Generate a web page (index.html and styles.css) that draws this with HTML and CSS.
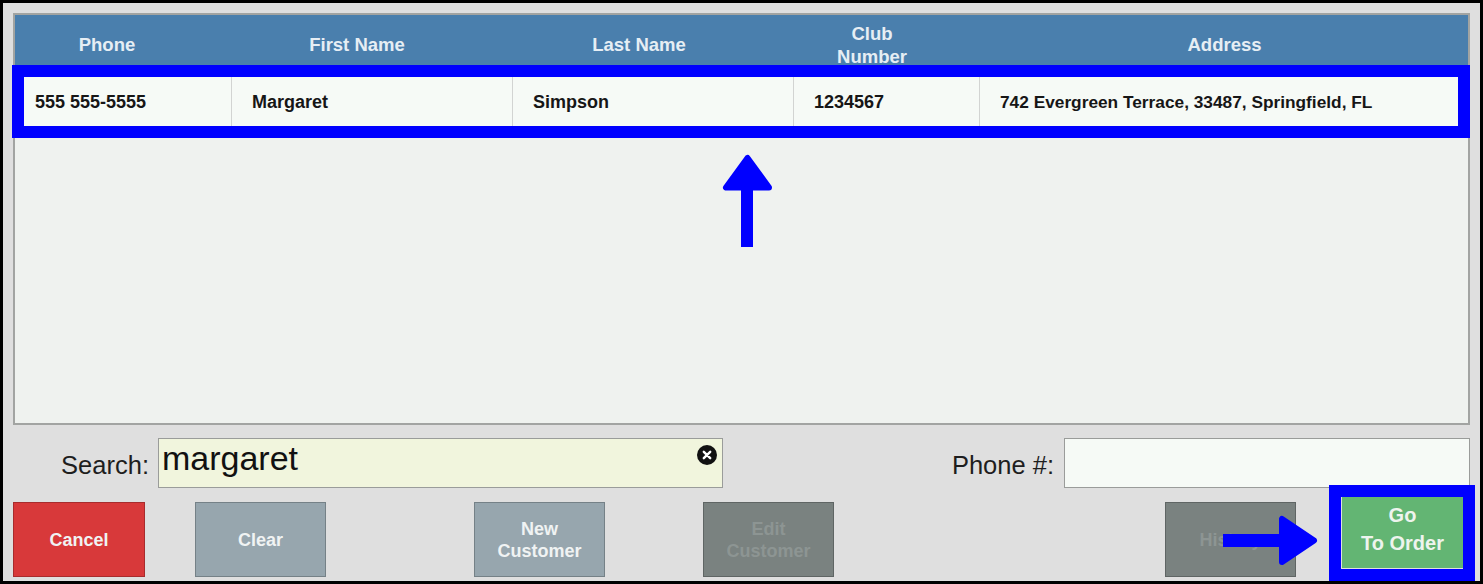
FILE: index.html
```html
<!DOCTYPE html>
<html>
<head>
<meta charset="utf-8">
<link rel="stylesheet" href="styles.css">
</head>
<body>
<div class="frame">
  <div class="panel">
    <div class="grid-head">
      <div class="hcell">Phone</div>
      <div class="hcell">First Name</div>
      <div class="hcell">Last Name</div>
      <div class="hcell hcell-two">Club<br>Number</div>
      <div class="hcell">Address</div>
    </div>
    <div class="grid-row">
      <div class="cell cell-first">555 555-5555</div>
      <div class="cell">Margaret</div>
      <div class="cell">Simpson</div>
      <div class="cell">1234567</div>
      <div class="cell cell-addr">742 Evergreen Terrace, 33487, Springfield, FL</div>
    </div>
  </div>

  <div class="search-row">
    <div class="field">
      <div class="lbl lbl-search">Search:</div>
      <div class="input input-search">margaret<span class="clear-icon"><svg width="20" height="20" viewBox="0 0 20 20"><circle cx="10" cy="10" r="10" fill="#111"/><path d="M6.8 6.8 L13.2 13.2 M13.2 6.8 L6.8 13.2" stroke="#fff" stroke-width="2.4" stroke-linecap="round"/></svg></span></div>
    </div>
    <div class="field field-phone">
      <div class="lbl">Phone #:</div>
      <div class="input input-phone"></div>
    </div>
  </div>

  <div class="btn-row">
    <div class="btn btn-cancel">Cancel</div>
    <div class="btn btn-gray btn-clear">Clear</div>
    <div class="btn btn-gray btn-new">New<br>Customer</div>
    <div class="btn btn-disabled btn-edit">Edit<br>Customer</div>
    <div class="btn btn-disabled btn-history">History</div>
    <div class="btn btn-go">Go<br>To Order</div>
  </div>

  <div class="mark mark-row"></div>
  <div class="mark mark-go"></div>
  <svg class="arrow arrow-up" width="56" height="100" viewBox="0 0 56 100">
    <polygon points="28.5,8 7,37.5 50,37.5" fill="#0000ff" stroke="#0000ff" stroke-width="6" stroke-linejoin="round"/>
    <rect x="22" y="36" width="12" height="61" fill="#0000ff"/>
  </svg>
  <svg class="arrow arrow-right" width="100" height="62" viewBox="0 0 100 62">
    <rect x="3" y="24" width="60" height="13" fill="#0000ff"/>
    <polygon points="62,9 62,52 94,30.5" fill="#0000ff" stroke="#0000ff" stroke-width="6" stroke-linejoin="round"/>
  </svg>
</div>
</body>
</html>
```

FILE: styles.css
```css
* { box-sizing: border-box; }
html, body { margin: 0; padding: 0; }
body {
  font-family: "Liberation Sans", Arial, sans-serif;
  background: #ffffff;
}
.frame {
  position: relative;
  width: 1483px;
  height: 584px;
  border: 3px solid #000;
  background: #dfdfdf;
  overflow: hidden;
}
.panel {
  margin: 10px 0 0 10px;
  width: 1457px;
  height: 412px;
  border: 2px solid #a2a4a2;
  background: #eff2ef;
}
.grid-head {
  display: grid;
  grid-template-columns: 184px 316px 248px 218px 487px;
  height: 50px;
  background: #4a7fad;
}
.hcell {
  display: flex;
  align-items: center;
  justify-content: center;
  text-align: center;
  padding-top: 5px;
  color: #e6eef4;
  font-weight: bold;
  font-size: 18.5px;
  line-height: 23px;
}
.hcell-two { padding-top: 7px; }
.grid-row {
  display: grid;
  grid-template-columns: 216px 281px 281px 186px 489px;
  height: 73px;
  background: #f6faf6;
}
.cell {
  display: flex;
  align-items: center;
  padding-left: 20px;
  padding-top: 1px;
  border-left: 1px solid #d2d4d2;
  font-weight: bold;
  font-size: 18px;
  color: #161616;
}
.cell-first { border-left: none; }
.cell-addr { font-size: 17.3px; }

.search-row {
  display: flex;
  margin-top: 13px;
  height: 50px;
  padding: 0 10px;
}
.field { display: flex; }
.field-phone { margin-left: auto; }
.lbl {
  font-size: 25.5px;
  line-height: 50px;
  padding-top: 2px;
  color: #1e1e1e;
  text-align: right;
}
.lbl-search { width: 136px; }
.input {
  position: relative;
  height: 50px;
  border: 1px solid #9a9c9a;
  margin-left: 9px;
}
.input-search {
  width: 565px;
  background: #f1f5dd;
  font-size: 34px;
  line-height: 39px;
  padding-left: 3px;
  color: #111;
}
.input-phone {
  width: 406px;
  margin-left: 10px;
  background: #f6faf6;
}
.clear-icon {
  position: absolute;
  right: 5px;
  top: 6px;
  width: 20px;
  height: 20px;
  line-height: 0;
}

.btn-row {
  display: flex;
  align-items: flex-start;
  margin-top: 14px;
  padding-left: 10px;
  height: 75px;
}
.btn {
  width: 131px;
  height: 75px;
  display: flex;
  align-items: center;
  justify-content: center;
  text-align: center;
  font-weight: bold;
  font-size: 18px;
  line-height: 22px;
  color: #f0f3f3;
  border: 1px solid rgba(0,0,0,0.22);
}
.btn-cancel { width: 132px; background: #d8393a; }
.btn-gray { background: #97a6ae; }
.btn-disabled { background: #7a8280; color: #8d9593; }
.btn-clear { margin-left: 50px; }
.btn-new { margin-left: 148px; }
.btn-edit { margin-left: 98px; }
.btn-history { margin-left: 331px; }
.btn-go {
  margin-left: 46px;
  margin-top: -5px;
  width: 121px;
  height: 71px;
  padding-bottom: 7px;
  border: none;
  background: #63b573;
  color: #eef4ee;
  font-size: 20px;
  line-height: 28px;
}

.mark {
  position: absolute;
  border: 12px solid #0000ff;
}
.mark-row {
  left: 9px;
  top: 62px;
  width: 1458px;
  height: 73px;
}
.mark-go {
  left: 1326px;
  top: 482px;
  width: 146px;
  height: 96px;
}
.arrow { position: absolute; }
.arrow-up { left: 716px; top: 147px; }
.arrow-right { left: 1217px; top: 507px; }
```
